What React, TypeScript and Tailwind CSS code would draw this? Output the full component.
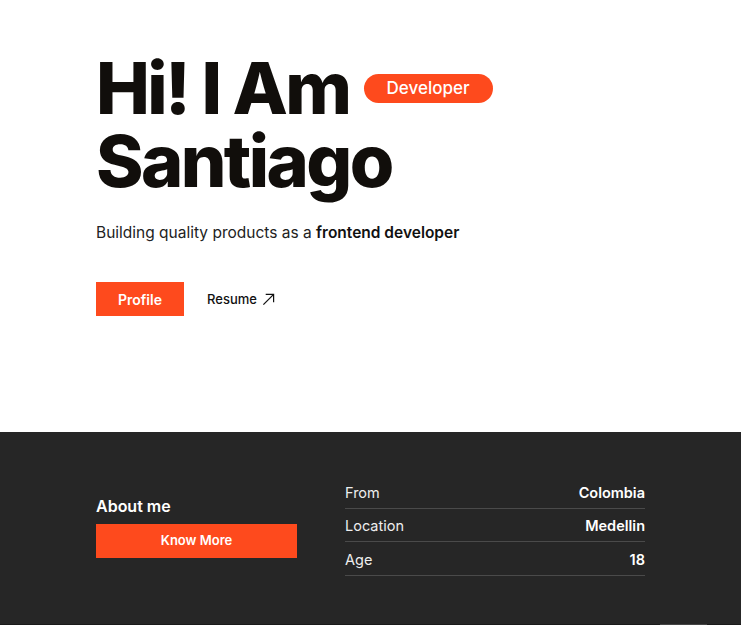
import React from 'react';

const facts = [
  { label: 'From', value: 'Colombia' },
  { label: 'Location', value: 'Medellin' },
  { label: 'Age', value: '18' },
];

function ArrowUpRight() {
  return (
    <svg width="13" height="13" viewBox="0 0 14 14" fill="none" stroke="currentColor" strokeWidth="1.3">
      <path d="M1.5 12.5 L12.5 1.5" />
      <path d="M4 1.5 H12.5 V10" />
    </svg>
  );
}

export default function App() {
  return (
    <div className="w-[741px] h-[625px] overflow-hidden bg-white font-['Inter',sans-serif]">
      <section className="h-[432px] pl-[96px] pt-[51px]">
        <h1 className="font-['Inter',sans-serif] font-extrabold text-[72px] leading-[73px] tracking-[-2.6px] text-[#110e0b]">
          <span className="flex items-center">
            Hi! I Am
            <span className="ml-[14px] mt-[2px] inline-flex h-[29px] w-[129px] items-center justify-center rounded-full bg-[#fe4a1d] text-[17px] font-medium leading-none tracking-normal text-white">
              Developer
            </span>
          </span>
          <span className="block">Santiago</span>
        </h1>
        <p className="mt-[24px] text-[15.5px] text-[#222]">
          Building quality products as a <span className="font-semibold text-[#111]">frontend developer</span>
        </p>
        <div className="mt-[38px] flex items-center gap-[23px]">
          <button className="h-[34px] w-[88px] bg-[#fe4a1d] text-[14px] font-semibold text-white">
            Profile
          </button>
          <button className="flex items-center gap-[5px] text-[13px] font-medium text-[#111]">
            Resume <ArrowUpRight />
          </button>
        </div>
      </section>
      <section className="h-[192px] bg-[#262626] px-[96px] pt-[43px] flex gap-[48px]">
        <div className="w-[201px] pt-[19px]">
          <h2 className="text-[16px] font-semibold text-white">About me</h2>
          <button className="mt-[6px] h-[34px] w-[201px] bg-[#fe4a1d] text-[13px] font-semibold text-white">
            Know More
          </button>
        </div>
        <ul className="w-[301px]">
          {facts.map((f) => (
            <li
              key={f.label}
              className="flex h-[33.5px] items-end justify-between pb-[4px] border-b border-[#4a4a4a] text-[14.5px] text-white"
            >
              <span className="font-normal text-[#eee]">{f.label}</span>
              <span className="font-semibold">{f.value}</span>
            </li>
          ))}
        </ul>
      </section>
      <div className="flex h-px bg-[#1a1a1a]">
        <div className="ml-[660px] w-[47px] bg-[#444]" />
      </div>
    </div>
  );
}
